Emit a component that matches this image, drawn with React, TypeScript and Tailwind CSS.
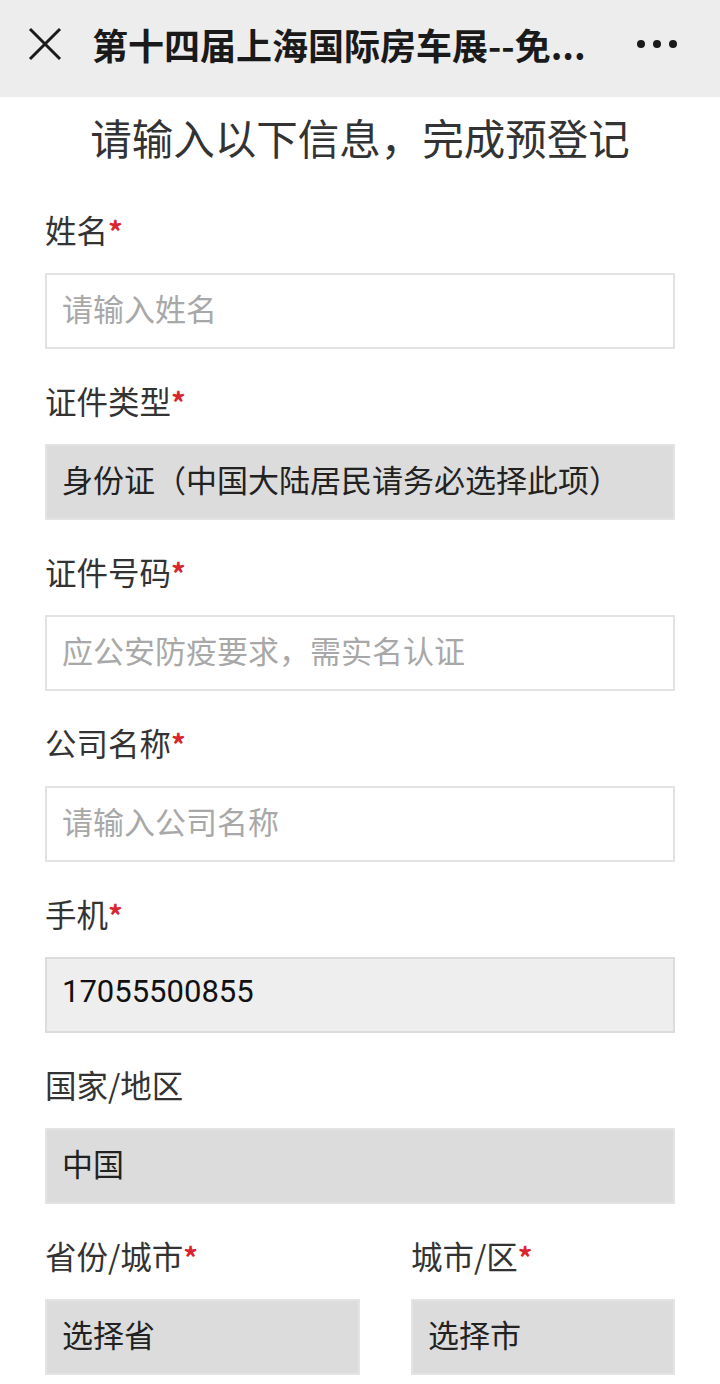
import React from 'react';

const cjk = { fontFamily: '"Noto Sans CJK SC", "Noto Sans", sans-serif' };

const Label: React.FC<{ text: string; required?: boolean }> = ({ text, required }) => (
  <div className="h-[40px] leading-[34px] text-[31.5px] text-[#333]">
    {text}
    {required && <span className="text-[#d8262c] font-bold text-[29px]">*</span>}
  </div>
);

type BoxKind = 'input' | 'select' | 'filled';

const Box: React.FC<{ kind: BoxKind; text: string; mono?: boolean }> = ({ kind, text, mono }) => {
  const skin =
    kind === 'input'
      ? 'bg-white border-[#e2e2e2] text-[#a8a8a8]'
      : kind === 'select'
        ? 'bg-[#dcdcdc] border-[#e4e4e4] text-[#222]'
        : 'bg-[#eeeeee] border-[#dcdcdc] text-[#111]';
  return (
    <div className={`mt-[21px] h-[76px] pb-[6px] border-2 flex items-center px-[15px] text-[31px] whitespace-nowrap ${skin}`}>
      <span style={mono ? { fontFamily: 'Roboto, "Noto Sans", sans-serif' } : undefined}>{text}</span>
    </div>
  );
};

const Field: React.FC<{ label: string; required?: boolean; kind: BoxKind; text: string; mono?: boolean }> = (p) => (
  <div className="mb-[34px]">
    <Label text={p.label} required={p.required} />
    <Box kind={p.kind} text={p.text} mono={p.mono} />
  </div>
);

export default function App() {
  return (
    <div className="w-[720px] h-[1384px] bg-white overflow-hidden" style={cjk}>
      {/* top bar */}
      <div className="h-[97px] pb-[9px] bg-[#ededed] flex items-center">
        <svg width="34" height="34" viewBox="0 0 34 34" className="ml-[28px]">
          <path d="M2 2 L32 32 M32 2 L2 32" stroke="#1a1a1a" strokeWidth="3" />
        </svg>
        <div className="ml-[30px] w-[520px] text-[36px] font-bold text-[#1a1a1a] whitespace-nowrap">
          第十四届上海国际房车展--免...
        </div>
        <div className="ml-auto mr-[43px] flex gap-[8px]">
          <span className="w-[8px] h-[8px] rounded-full bg-[#1a1a1a]" />
          <span className="w-[8px] h-[8px] rounded-full bg-[#1a1a1a]" />
          <span className="w-[8px] h-[8px] rounded-full bg-[#1a1a1a]" />
        </div>
      </div>

      <div className="pt-[17px] h-[46px] leading-[46px] text-center text-[41.5px] text-[#333] box-content">
        请输入以下信息，完成预登记
      </div>

      <div className="mt-[52px] px-[45px]">
        <Field label="姓名" required kind="input" text="请输入姓名" />
        <Field label="证件类型" required kind="select" text="身份证（中国大陆居民请务必选择此项）" />
        <Field label="证件号码" required kind="input" text="应公安防疫要求，需实名认证" />
        <Field label="公司名称" required kind="input" text="请输入公司名称" />
        <Field label="手机" required kind="filled" text="17055500855" mono />
        <Field label="国家/地区" kind="select" text="中国" />

        <div className="flex justify-between">
          <div className="w-[315px]">
            <Label text="省份/城市" required />
            <Box kind="select" text="选择省" />
          </div>
          <div className="w-[264px]">
            <Label text="城市/区" required />
            <Box kind="select" text="选择市" />
          </div>
        </div>
      </div>
    </div>
  );
}
